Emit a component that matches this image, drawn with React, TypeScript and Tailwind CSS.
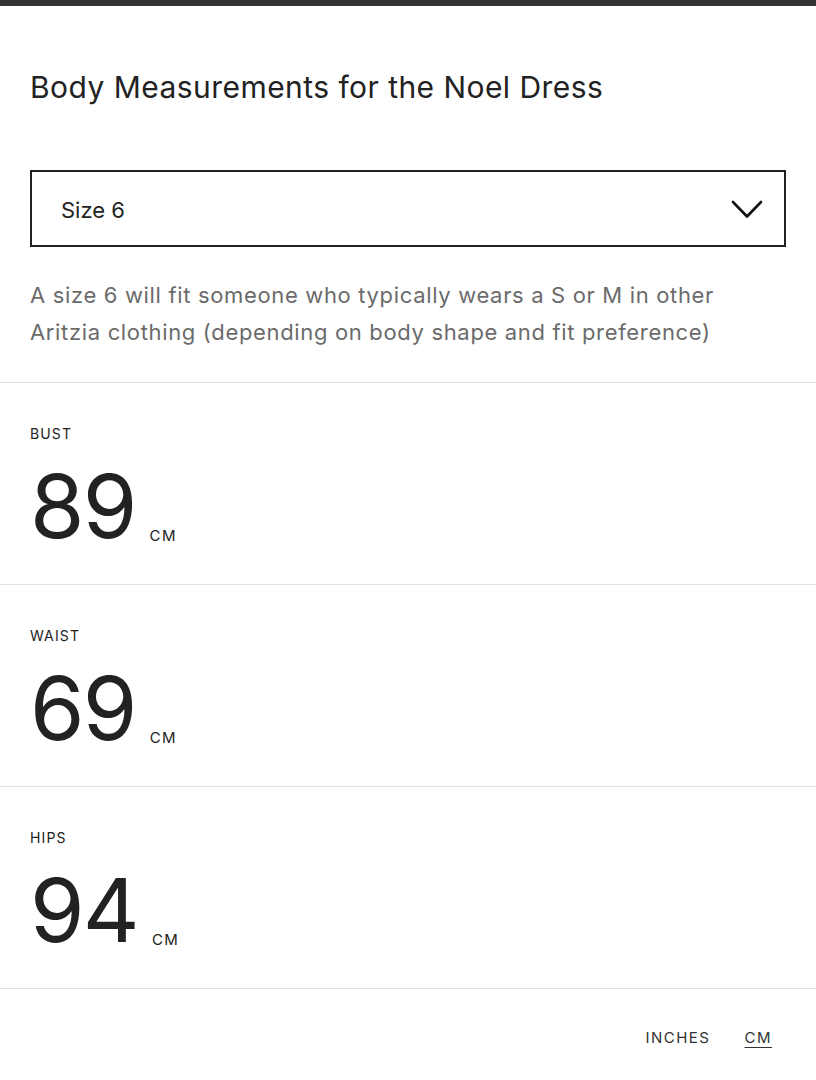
const sections = [
  { label: 'BUST', value: '89' },
  { label: 'WAIST', value: '69' },
  { label: 'HIPS', value: '94' },
];

export default function App() {
  return (
    <div className="min-h-[1080px] bg-white text-[#222] font-['Inter','Liberation_Sans',sans-serif]">
      <div className="h-[6px] bg-[#333]" />

      {/* Header */}
      <div className="px-[30px] pt-[63px]">
        <h1 className="text-[30px] leading-[36px] font-normal tracking-[0.015em] text-[#222]">
          Body Measurements for the Noel Dress
        </h1>

        <div className="mt-[65px] h-[77px] border-2 border-[#222] flex items-center justify-between pl-[29px] pr-[21px]">
          <span className="mt-[3px] text-[22px] text-[#222]">Size 6</span>
          <svg width="32" height="20" viewBox="0 0 32 20" fill="none" className="mt-[3px]">
            <polyline points="2,2 16,16.5 30,2" stroke="#111" strokeWidth="2.6" strokeLinecap="round" strokeLinejoin="round" />
          </svg>
        </div>

        <p className="mt-[30px] mb-[31px] text-[22px] leading-[37px] tracking-[0.03em] text-[#6b6b6b]">
          A size 6 will fit someone who typically wears a S or M in other
          <br />
          Aritzia clothing (depending on body shape and fit preference)
        </p>
      </div>

      {/* Measurements */}
      {sections.map((s) => (
        <div key={s.label} className="border-t border-[#e2e2e2] h-[202px] px-[30px] pt-[42px]">
          <div className="text-[14px] leading-[18px] tracking-[0.08em] text-[#222]">{s.label}</div>
          <div className="mt-[23px] flex items-end">
            <span className="text-[88px] leading-[80px] text-[#222] tracking-[-0.02em]">{s.value}</span>
            <span className="ml-[14px] mb-[3px] text-[15px] leading-[14px] tracking-[0.1em] text-[#222]">CM</span>
          </div>
        </div>
      ))}

      {/* Units toggle */}
      <div className="border-t border-[#e2e2e2] flex justify-end gap-[34px] pr-[44px] pt-[38px] pb-[30px]">
        <span className="text-[15px] tracking-[0.1em] text-[#333]">INCHES</span>
        <span className="text-[15px] tracking-[0.1em] text-[#333] underline underline-offset-4">CM</span>
      </div>
    </div>
  );
}
